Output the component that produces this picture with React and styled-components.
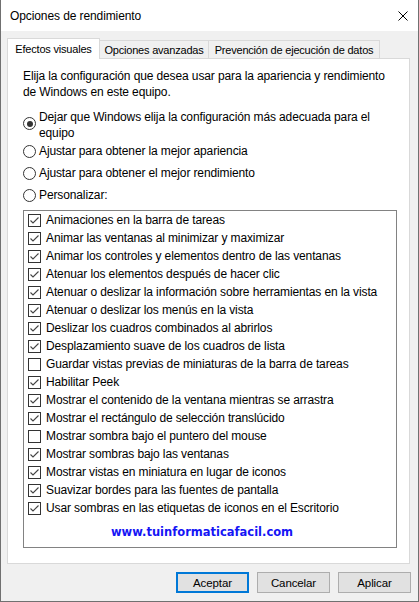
import React, { useState } from "react";
import styled, { createGlobalStyle } from "styled-components";

const GlobalStyle = createGlobalStyle`
  html, body {
    margin: 0;
    padding: 0;
    background: #f0f0f0;
  }
  * { box-sizing: border-box; }
`;

const Window = styled.div`
  width: 419px;
  height: 602px;
  border: 1px solid #707070;
  border-top: none;
  background: #f0f0f0;
  display: flex;
  flex-direction: column;
  font-family: "Liberation Sans", Arial, sans-serif;
  font-size: 12px;
  letter-spacing: -0.12px;
  color: #000;
`;

const TitleBar = styled.div`
  height: 31px;
  flex: none;
  background: #fff;
  display: flex;
  align-items: center;
  justify-content: space-between;
  padding: 0 10px 0 9px;
  font-size: 12px;
  letter-spacing: -0.1px;
`;

const Body = styled.div`
  flex: 1;
  display: flex;
  flex-direction: column;
  padding: 7px 8px 8px 6px;
`;

const TabRow = styled.div`
  height: 20px;
  display: flex;
  align-items: flex-end;
  font-size: 11px;
  letter-spacing: -0.2px;
`;

const Tab = styled.div`
  width: ${(p) => p.w}px;
  height: ${(p) => (p.active ? 21 : 18)}px;
  margin-bottom: ${(p) => (p.active ? -1 : 0)}px;
  margin-left: ${(p) => (p.first ? 0 : -1)}px;
  position: relative;
  z-index: ${(p) => (p.active ? 2 : 1)};
  display: flex;
  align-items: center;
  justify-content: center;
  background: ${(p) => (p.active ? "#fff" : "#f0f0f0")};
  border: 1px solid #d9d9d9;
  border-bottom: none;
  white-space: nowrap;
`;

const Panel = styled.div`
  height: 506px;
  background: #fff;
  border: 1px solid #d9d9d9;
  padding: 9px 12px 0 15px;
  display: flex;
  flex-direction: column;
`;

const Intro = styled.p`
  margin: 0;
  line-height: 16px;
  max-width: 366px;
`;

const RadioGroup = styled.div`
  margin-top: 9px;
  display: flex;
  flex-direction: column;
`;

const RadioRow = styled.label`
  display: flex;
  align-items: ${(p) => (p.multi ? "center" : "flex-start")};
  padding-bottom: ${(p) => (p.multi ? 2 : 6)}px;
  line-height: 16px;
  cursor: default;
`;

const RadioCircle = styled.span`
  flex: none;
  width: 13px;
  height: 13px;
  margin-top: ${(p) => (p.multi ? -3 : 1.5)}px;
  margin-right: 3px;
  border: 1px solid #333;
  border-radius: 50%;
  background: #fff;
  display: flex;
  align-items: center;
  justify-content: center;

  &::after {
    content: "";
    display: ${(p) => (p.checked ? "block" : "none")};
    width: 6px;
    height: 6px;
    border-radius: 50%;
    background: #333;
  }
`;

const ListBox = styled.div`
  margin-top: 1px;
  height: 338px;
  border: 1px solid #828282;
  background: #fff;
  display: flex;
  flex-direction: column;
`;

const CheckRow = styled.label`
  height: 18px;
  display: flex;
  align-items: center;
  padding-left: 4px;
  white-space: nowrap;
  cursor: default;
`;

const CheckBox = styled.span`
  flex: none;
  width: 13px;
  height: 13px;
  margin: 1px 5px 0 0;
  border: 1px solid #333;
  background: #fff;
  display: flex;
  align-items: center;
  justify-content: center;
`;

const Watermark = styled.div`
  margin-top: 7px;
  padding-right: 16px;
  line-height: 16px;
  text-align: center;
  font-family: "DejaVu Sans", Verdana, sans-serif;
  font-weight: bold;
  font-size: 11.5px;
  letter-spacing: 0;
  color: #1515f5;
`;

const ButtonRow = styled.div`
  margin-top: 8px;
  margin-right: -1px;
  display: flex;
  justify-content: flex-end;
  gap: 8px;
`;

const Button = styled.button`
  width: 73px;
  height: 21px;
  padding: 0;
  font-family: inherit;
  font-size: 11.5px;
  letter-spacing: -0.1px;
  color: #000;
  background: #e1e1e1;
  border: ${(p) => (p.primary ? "2px solid #0078d7" : "1px solid #adadad")};
`;

const effects = [
  ["Animaciones en la barra de tareas", true],
  ["Animar las ventanas al minimizar y maximizar", true],
  ["Animar los controles y elementos dentro de las ventanas", true],
  ["Atenuar los elementos después de hacer clic", true],
  ["Atenuar o deslizar la información sobre herramientas en la vista", true],
  ["Atenuar o deslizar los menús en la vista", true],
  ["Deslizar los cuadros combinados al abrirlos", true],
  ["Desplazamiento suave de los cuadros de lista", true],
  ["Guardar vistas previas de miniaturas de la barra de tareas", false],
  ["Habilitar Peek", true],
  ["Mostrar el contenido de la ventana mientras se arrastra", true],
  ["Mostrar el rectángulo de selección translúcido", true],
  ["Mostrar sombra bajo el puntero del mouse", false],
  ["Mostrar sombras bajo las ventanas", true],
  ["Mostrar vistas en miniatura en lugar de iconos", true],
  ["Suavizar bordes para las fuentes de pantalla", true],
  ["Usar sombras en las etiquetas de iconos en el Escritorio", true],
];

const radios = [
  "Dejar que Windows elija la configuración más adecuada para el equipo",
  "Ajustar para obtener la mejor apariencia",
  "Ajustar para obtener el mejor rendimiento",
  "Personalizar:",
];

const CloseIcon = () => (
  <svg width="10" height="10" viewBox="0 0 10 10">
    <path d="M0.5 0.5 L9.5 9.5 M9.5 0.5 L0.5 9.5" stroke="#000" strokeWidth="1" fill="none" />
  </svg>
);

const Check = () => (
  <svg width="11" height="11" viewBox="0 0 11 11">
    <polyline points="1.5,5.5 4,8 9.5,2.5" stroke="#444" strokeWidth="1.1" fill="none" />
  </svg>
);

export default function App() {
  const [choice, setChoice] = useState(0);
  const [checks, setChecks] = useState(effects.map((e) => e[1]));

  const toggle = (i) => {
    const next = [...checks];
    next[i] = !next[i];
    setChecks(next);
  };

  return (
    <>
      <GlobalStyle />
      <Window>
        <TitleBar>
          <span>Opciones de rendimiento</span>
          <CloseIcon />
        </TitleBar>
        <Body>
          <TabRow>
            <Tab first active w={93}>Efectos visuales</Tab>
            <Tab w={110}>Opciones avanzadas</Tab>
            <Tab w={172}>Prevención de ejecución de datos</Tab>
          </TabRow>
          <Panel>
            <Intro>
              Elija la configuración que desea usar para la apariencia y rendimiento de Windows en este equipo.
            </Intro>
            <RadioGroup>
              {radios.map((r, i) => (
                <RadioRow key={r} multi={i === 0} onClick={() => setChoice(i)}>
                  <RadioCircle multi={i === 0} checked={choice === i} />
                  <span>{r}</span>
                </RadioRow>
              ))}
            </RadioGroup>
            <ListBox>
              {effects.map(([label], i) => (
                <CheckRow key={label} onClick={() => toggle(i)}>
                  <CheckBox>{checks[i] && <Check />}</CheckBox>
                  {label}
                </CheckRow>
              ))}
              <Watermark>www.tuinformaticafacil.com</Watermark>
            </ListBox>
          </Panel>
          <ButtonRow>
            <Button primary>Aceptar</Button>
            <Button>Cancelar</Button>
            <Button>Aplicar</Button>
          </ButtonRow>
        </Body>
      </Window>
    </>
  );
}
